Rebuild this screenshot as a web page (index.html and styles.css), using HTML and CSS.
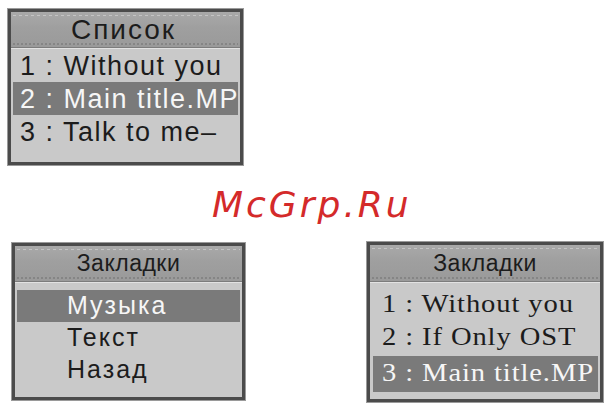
FILE: index.html
```html
<!DOCTYPE html>
<html lang="ru">
<head>
<meta charset="utf-8">
<title>Список / Закладки</title>
<link rel="stylesheet" href="styles.css">
</head>
<body>
<div class="page">
  <div class="top">
    <div class="screen s1">
      <div class="head"><span class="title">Список</span></div>
      <div class="list">
        <div class="row">1 : Without you</div>
        <div class="row sel">2 : Main title.MP</div>
        <div class="row">3 : Talk to me–</div>
      </div>
    </div>
  </div>
  <div class="mark">McGrp.Ru</div>
  <div class="bottom">
    <div class="screen s2">
      <div class="head"><span class="title">Закладки</span></div>
      <div class="list">
        <div class="row sel">Музыка</div>
        <div class="row">Текст</div>
        <div class="row">Назад</div>
      </div>
    </div>
    <div class="screen s3">
      <div class="head"><span class="title">Закладки</span></div>
      <div class="list">
        <div class="row"><span class="txt">1 : Without you</span></div>
        <div class="row"><span class="txt">2 : If Only OST</span></div>
        <div class="row sel"><span class="txt">3 : Main title.MP</span></div>
      </div>
    </div>
  </div>
</div>
</body>
</html>
```
FILE: styles.css
```css
* { box-sizing: border-box; }
html, body { margin: 0; padding: 0; background: #ffffff; }
body { width: 610px; height: 406px; overflow: hidden; font-family: "Liberation Sans", Arial, sans-serif; }

.page { padding-top: 9px; }

.top { display: flex; padding-left: 8px; }

.screen {
  display: flex;
  flex-direction: column;
  border: 3px solid #4b4b4b;
  box-shadow: 0 0 0 1px #9a9a9a;
  background: #c9c9c9;
  color: #1c1c1c;
}

.head {
  position: relative;
  display: flex;
  align-items: center;
  justify-content: center;
  background: linear-gradient(180deg, #a9a9a9 0%, #9f9f9f 45%, #9a9a9a 100%);
  border-bottom: 1px solid #7c7c7c;
  box-shadow: 0 1px 0 #e2e2e2;
}
.head::before {
  content: "";
  position: absolute;
  left: 2px; right: 2px; top: 3px;
  height: 1px;
  background: repeating-linear-gradient(90deg, #c4c4c4 0 3px, transparent 3px 6px);
}
.head::after {
  content: "";
  position: absolute;
  left: 2px; right: 2px; bottom: 2px;
  height: 2px;
  background: repeating-linear-gradient(90deg, #858585 0 2px, transparent 2px 4px);
}
.title { position: relative; z-index: 1; }

.list { display: flex; flex-direction: column; }
.row { white-space: nowrap; overflow: hidden; }
.row.sel { background: #7a7a7a; color: #f6f6f6; }

/* screen 1 */
.s1 { width: 235px; height: 156px; }
.s1 .head { height: 36px; }
.s1 .title { font-size: 28px; letter-spacing: 2px; margin-left: -4px; }
.s1 .list { padding: 1px 2px 0 2px; }
.s1 .row { height: 33px; line-height: 35px; font-size: 27px; letter-spacing: 1.5px; padding-left: 7px; }

/* watermark */
.mark {
  height: 40px;
  margin-top: 20px;
  padding-left: 212px;
  font-family: "DejaVu Sans", Verdana, sans-serif;
  font-style: italic;
  font-size: 36px;
  line-height: 40px;
  letter-spacing: 3px;
  color: #d42a2a;
}

.bottom {
  display: flex;
  align-items: flex-start;
  margin-top: 18px;
  padding-left: 12px;
}

/* screen 2 */
.s2 { width: 233px; height: 157px; }
.s2 .head { height: 36px; }
.s2 .title { font-size: 23px; letter-spacing: 0.5px; }
.s2 .list { padding: 8px 2px 0 2px; }
.s2 .row { height: 32px; line-height: 30px; font-size: 25px; letter-spacing: 2px; padding-left: 50px; }

/* screen 3 */
.s3 { width: 236px; height: 160px; margin-left: 122px; margin-top: -1px; }
.s3 .head { height: 37px; }
.s3 .title { font-size: 23px; letter-spacing: 0.5px; }
.s3 .list { padding: 6px 2px 0 3px; }
.s3 .row {
  height: 33px; line-height: 31px;
  font-family: "Liberation Serif", "Times New Roman", serif;
  font-size: 26px; letter-spacing: 0.8px; padding-left: 9px;
}
.s3 .txt { display: inline-block; transform: scaleX(1.1); transform-origin: left center; }
.s3 .row.sel { height: 36px; line-height: 33px; margin-top: 2px; }
```
